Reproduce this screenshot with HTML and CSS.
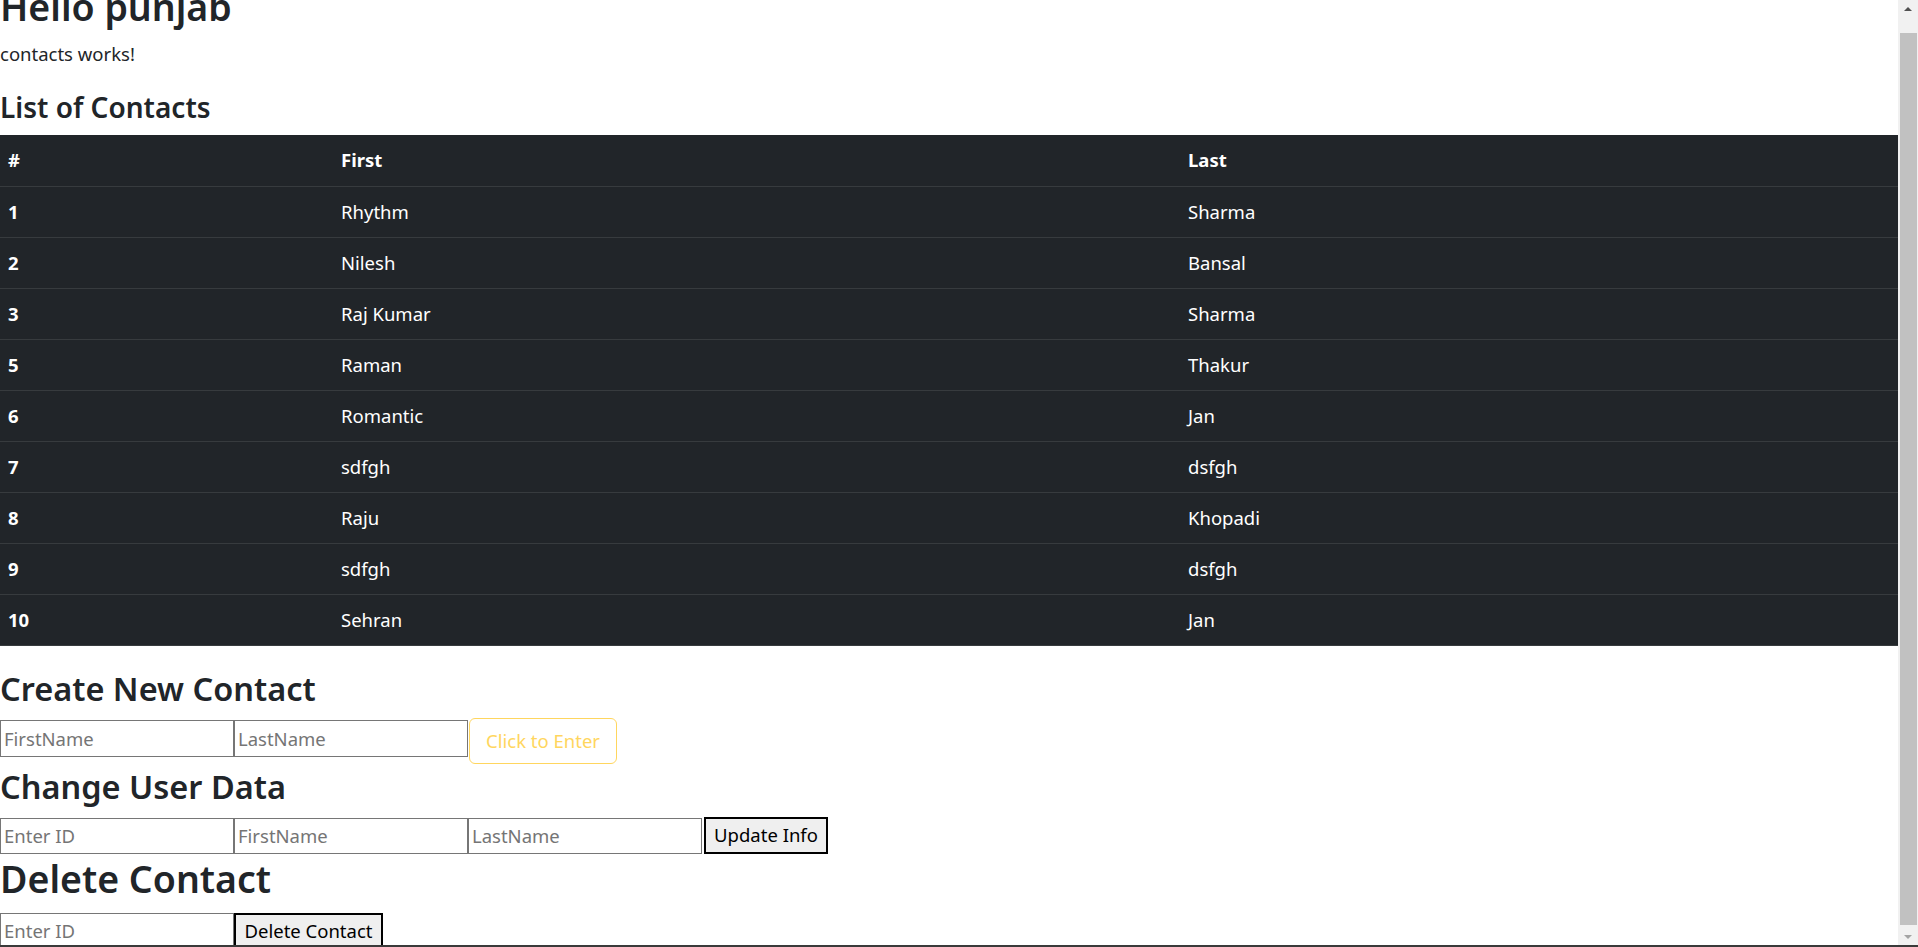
FILE: index.html
```html
<!DOCTYPE html>
<html lang="en">
<head>
<meta charset="utf-8">
<title>Contacts</title>
<link rel="stylesheet" href="styles.css">
</head>
<body>
<div class="window">
  <div class="frame">
    <div class="viewport">
      <div class="page">
        <h1 class="h-hello">Hello punjab</h1>
        <p class="lead-text">contacts works!</p>
        <h3 class="h-list">List of Contacts</h3>
        <table class="contacts">
          <colgroup><col class="c1"><col class="c2"><col class="c3"></colgroup>
          <thead>
            <tr><th>#</th><th>First</th><th>Last</th></tr>
          </thead>
          <tbody>
            <tr><th>1</th><td>Rhythm</td><td>Sharma</td></tr>
            <tr><th>2</th><td>Nilesh</td><td>Bansal</td></tr>
            <tr><th>3</th><td>Raj Kumar</td><td>Sharma</td></tr>
            <tr><th>5</th><td>Raman</td><td>Thakur</td></tr>
            <tr><th>6</th><td>Romantic</td><td>Jan</td></tr>
            <tr><th>7</th><td>sdfgh</td><td>dsfgh</td></tr>
            <tr><th>8</th><td>Raju</td><td>Khopadi</td></tr>
            <tr><th>9</th><td>sdfgh</td><td>dsfgh</td></tr>
            <tr><th>10</th><td>Sehran</td><td>Jan</td></tr>
          </tbody>
        </table>
        <h2 class="h-create">Create New Contact</h2>
        <div class="form-row row-create">
          <input class="field" type="text" placeholder="FirstName">
          <input class="field" type="text" placeholder="LastName">
          <button class="btn-warn" type="button" disabled>Click to Enter</button>
        </div>
        <h2 class="h-change">Change User Data</h2>
        <div class="form-row row-change">
          <input class="field" type="text" placeholder="Enter ID">
          <input class="field" type="text" placeholder="FirstName">
          <input class="field" type="text" placeholder="LastName">
          <button class="btn-plain btn-update" type="button">Update Info</button>
        </div>
        <h1 class="h-delete">Delete Contact</h1>
        <div class="form-row row-delete">
          <input class="field" type="text" placeholder="Enter ID">
          <button class="btn-plain btn-delete" type="button">Delete Contact</button>
        </div>
      </div>
    </div>
    <div class="scrollbar">
      <div class="sb-btn"><span class="tri-up"></span></div>
      <div class="sb-track"><div class="sb-thumb"></div></div>
      <div class="sb-btn"><span class="tri-down"></span></div>
    </div>
  </div>
  <div class="bottom-edge"></div>
</div>
</body>
</html>
```

FILE: styles.css
```css
* { box-sizing: border-box; }

html, body {
  margin: 0;
  padding: 0;
  height: 100%;
  overflow: hidden;
  background: #ffffff;
}

body {
  font-family: "Noto Sans", "Open Sans", sans-serif;
  font-size: 18.5px;
  color: #212529;
}

.window {
  height: 947px;
  display: flex;
  flex-direction: column;
}

.frame {
  flex: 1;
  display: flex;
  min-height: 0;
}

.viewport {
  flex: 1;
  overflow: hidden;
  min-width: 0;
}

.page {
  margin-top: -17px;
}

h1, h2, h3, p { margin: 0; }

.h-hello {
  font-size: 37.5px;
  line-height: 48px;
  font-weight: 600;
  margin-bottom: 8px;
}

.lead-text {
  font-size: 18.5px;
  line-height: 30px;
  margin-bottom: 21px;
}

.h-list {
  font-size: 28px;
  line-height: 34px;
  font-weight: 600;
  margin-bottom: 11px;
}

.contacts {
  width: 100%;
  border-collapse: collapse;
  table-layout: fixed;
  background: #212529;
  color: #ffffff;
  font-size: 18.5px;
}

.contacts .c1 { width: 333px; }
.contacts .c2 { width: 847px; }

.contacts th,
.contacts td {
  height: 51px;
  padding: 0 8px;
  text-align: left;
  vertical-align: middle;
  border-bottom: 1px solid #373b3e;
  line-height: 30px;
}

.contacts th { font-weight: 700; }
.contacts td { font-weight: 400; }

.h-create {
  font-size: 32.5px;
  line-height: 38px;
  font-weight: 600;
  margin: 24px 0 10px;
}

.h-change {
  font-size: 32.5px;
  line-height: 38px;
  font-weight: 600;
  margin: 4px 0 11px;
}

.h-delete {
  font-size: 37.5px;
  line-height: 48px;
  font-weight: 600;
  margin: 1px 0 10px;
}

.form-row {
  display: flex;
  align-items: flex-start;
}

.field {
  width: 234px;
  height: 36px;
  border: 1px solid #767676;
  padding: 0 3px;
  font-family: inherit;
  font-size: 18.5px;
  color: #212529;
  background: #ffffff;
  margin: 0;
  border-radius: 0;
  outline: none;
}

.field::placeholder { color: #757575; }

.row-create .field {
  height: 37px;
  margin-top: 2px;
}

.row-change .field { margin-top: 1px; }

.btn-warn {
  margin-left: 1px;
  width: 148px;
  height: 46px;
  padding: 0 6px;
  font-family: inherit;
  font-size: 18.5px;
  line-height: 30px;
  white-space: nowrap;
  color: #ffd65e;
  background: transparent;
  border: 1px solid #ffd65e;
  border-radius: 6px;
}

.btn-plain {
  height: 37px;
  padding: 0 4px;
  font-family: inherit;
  font-size: 18.5px;
  line-height: 30px;
  white-space: nowrap;
  color: #000000;
  background: #efefef;
  border: 2px solid #000000;
  border-radius: 0;
}

.btn-update {
  width: 124px;
  margin-left: 2px;
}

.btn-delete { width: 149px; }

.scrollbar {
  width: 20px;
  flex: none;
  background: #f1f1f1;
  display: flex;
  flex-direction: column;
}

.sb-btn {
  height: 17px;
  display: flex;
  align-items: center;
  justify-content: center;
}

.tri-up {
  width: 0;
  height: 0;
  border-left: 4px solid transparent;
  border-right: 4px solid transparent;
  border-bottom: 4px solid #505050;
}

.tri-down {
  width: 0;
  height: 0;
  border-left: 4px solid transparent;
  border-right: 4px solid transparent;
  border-top: 4px solid #a3a3a3;
}

.sb-track {
  flex: 1;
  padding: 16px 1px 3px 2px;
}

.sb-thumb {
  height: 100%;
  background: #c1c1c1;
}

.bottom-edge {
  height: 2px;
  background: #3a3a3a;
  flex: none;
}
```
